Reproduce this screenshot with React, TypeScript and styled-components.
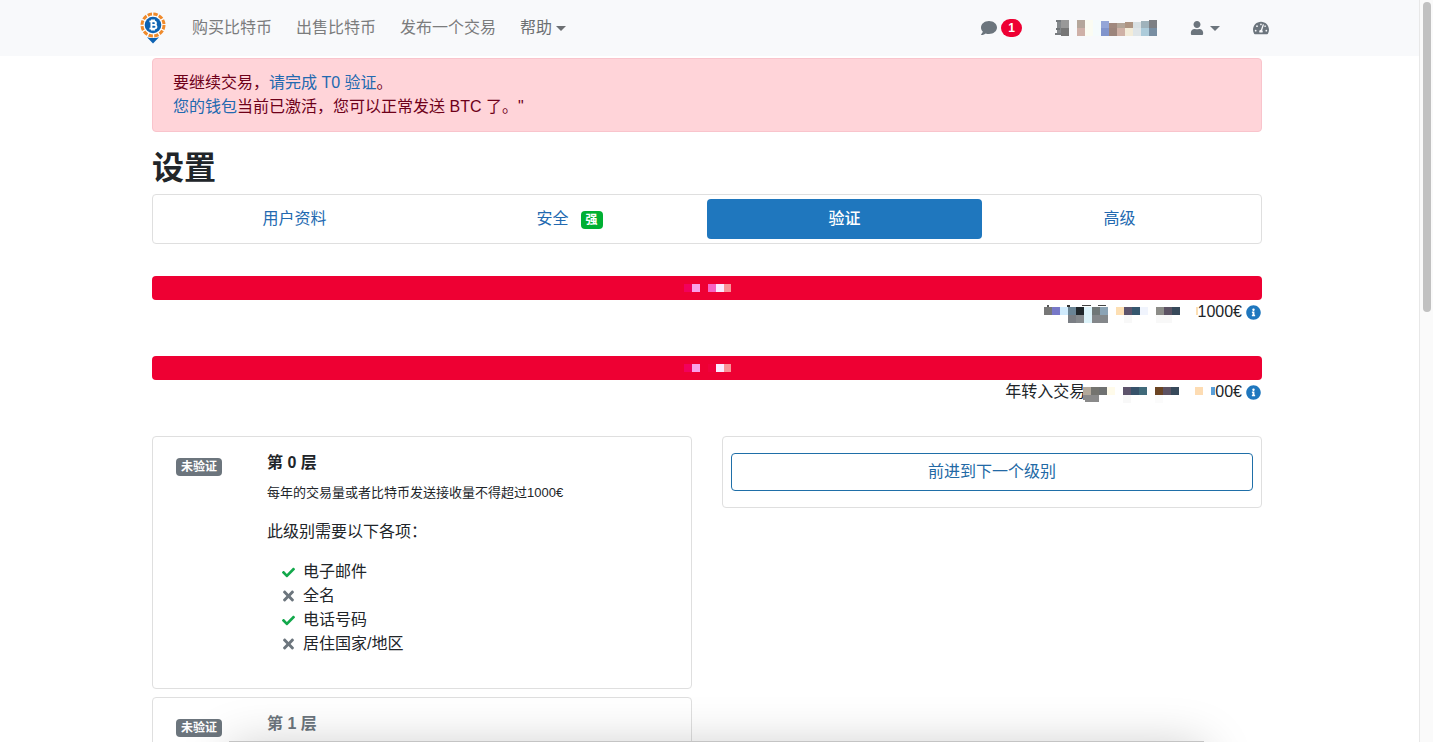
import React from 'react';
import styled, { createGlobalStyle, css } from 'styled-components';
import { FaComment, FaUser, FaTachometerAlt, FaCheck, FaTimes, FaInfoCircle } from 'react-icons/fa';

const GlobalStyle = createGlobalStyle`
  *, *::before, *::after { box-sizing: border-box; }
  body {
    margin: 0;
    background: #fff;
    color: #212529;
    font-family: "Liberation Sans", "Noto Sans CJK SC", sans-serif;
    font-size: 16px;
    line-height: 24px;
  }
  a { color: #2269b0; text-decoration: none; }
  h1, h2, p, ul { margin: 0; padding: 0; }
`;

const Shell = styled.div`
  display: grid;
  grid-template-columns: minmax(0, 1fr) 14px;
  height: 100vh;
`;

const Page = styled.div`
  overflow-y: auto;
  scrollbar-width: none;
`;

const ScrollTrack = styled.div`
  border-left: 1px solid #e8e8e8;
  background: #fafafa;
  padding: 2px 2px 2px 3px;
`;

const ScrollThumb = styled.div`
  height: 42%;
  border-radius: 4px;
  background: #c1c1c1;
`;

const NavBar = styled.header`
  background: #f8f9fb;
  padding-right: 5px;
`;

const NavInner = styled.div`
  display: flex;
  align-items: center;
  max-width: 1140px;
  height: 56px;
  margin: 0 auto;
  padding: 0 8px 0 3px;
`;

const Brand = styled.a`
  display: flex;
  margin-right: 26px;
`;

const NavLinks = styled.nav`
  display: flex;
  gap: 24px;
`;

const NavLink = styled.a`
  color: #7b7c7d;
`;

const NavButton = styled.button`
  display: flex;
  align-items: center;
  gap: 4px;
  padding: 0;
  border: 0;
  background: none;
  color: #6c6f72;
  font: inherit;
`;

const Caret = styled.span`
  border: 5px solid transparent;
  border-top-color: currentColor;
  border-bottom: 0;
`;

const NavTools = styled.div`
  display: flex;
  align-items: center;
  gap: 33px;
  margin-left: auto;
  color: #6c757d;
`;

const ToolLink = styled.a`
  display: flex;
  align-items: center;
  gap: 4px;
  color: #6c757d;
`;

const ToolButton = styled(NavButton)`
  gap: 6px;
  color: #6c757d;
`;

const CountBadge = styled.span`
  min-width: 21px;
  border-radius: 9px;
  background: #ee0033;
  color: #fff;
  font-size: 12px;
  font-weight: 700;
  line-height: 18px;
  text-align: center;
`;

const Container = styled.main`
  padding: 2px 20px 32px 15px;
  > * { max-width: 1110px; margin-left: auto; margin-right: auto; }
`;

const Alert = styled.div`
  padding: 12px 20px;
  border: 1px solid #f9c4cc;
  border-radius: 4px;
  background: #ffd4d9;
  color: #6e0019;
`;

const PageTitle = styled.h1`
  padding: 17px 0 7px;
  font-size: 32px;
  font-weight: 700;
  line-height: 38px;
`;

const Tabs = styled.nav`
  display: grid;
  grid-template-columns: repeat(4, 1fr);
  padding: 4px;
  border: 1px solid #dfdfdf;
  border-radius: 4px;
`;

const Tab = styled.a<{ $active?: boolean }>`
  padding: 8px;
  border-radius: 4px;
  text-align: center;
  ${({ $active }) => $active && css`
    background: #1f77be;
    color: #fff;
    font-weight: 500;
  `}
`;

const Badge = styled.span<{ $tone: 'green' | 'gray' }>`
  display: inline-block;
  padding: 3px 5px;
  border-radius: 4px;
  background: ${({ $tone }) => ($tone === 'green' ? '#00b033' : '#6c757d')};
  color: #fff;
  font-size: 12px;
  font-weight: 700;
  line-height: 12px;
`;

const TabBadge = styled(Badge)`
  margin-left: 12px;
`;

const Volume = styled.section`
  padding-top: 32px;
`;

const Bar = styled.div`
  display: flex;
  justify-content: center;
  align-items: center;
  height: 24px;
  border-radius: 4px;
  background: #ee0033;
`;

const VolumeText = styled.p`
  display: flex;
  justify-content: flex-end;
  align-items: center;
  height: 24px;
  padding-right: 1px;
`;

const InfoButton = styled.button`
  display: flex;
  margin-left: 4px;
  padding: 0;
  border: 0;
  background: none;
  color: #1f77be;
`;

const Columns = styled.div`
  display: grid;
  grid-template-columns: repeat(2, minmax(0, 1fr));
  align-items: start;
  gap: 30px;
  padding-top: 32px;
`;

const Stack = styled.div`
  display: grid;
  gap: 8px;
`;

const Card = styled.article`
  border: 1px solid #dfdfdf;
  border-radius: 4px;
`;

const LevelCard = styled(Card)`
  display: grid;
  grid-template-columns: 91px minmax(0, 1fr);
  padding: 16px 23px;
`;

const LevelStatus = styled.div`
  padding-top: 1px;
`;

const LevelTitle = styled.h2<{ $muted?: boolean }>`
  margin-bottom: 8px;
  color: ${({ $muted }) => ($muted ? '#6c757d' : 'inherit')};
  font-size: 16px;
  font-weight: 600;
  line-height: 20px;
`;

const Limit = styled.p`
  margin-bottom: 15px;
  font-size: 13px;
`;

const Requirements = styled.ul`
  margin: 16px 0;
  padding-left: 15px;
  list-style: none;
`;

const Requirement = styled.li<{ $done: boolean }>`
  display: flex;
  align-items: center;
  gap: 8px;
  svg { width: 13px; color: ${({ $done }) => ($done ? '#12a84b' : '#6c757d')}; }
`;

const ActionCard = styled(Card)`
  padding: 16px 8px;
`;

const OutlineButton = styled.button`
  display: block;
  width: 100%;
  padding: 6px 12px;
  border: 1px solid #1f6fa8;
  border-radius: 4px;
  background: #fff;
  color: #2269a5;
  font: inherit;
`;

const DockShadow = styled.div`
  position: fixed;
  top: calc(100vh - 1px);
  left: 16%;
  right: 16%;
  height: 80px;
  background: #c4c4c4;
  box-shadow: 0 6px 50px rgba(0, 0, 0, 0.22);
  pointer-events: none;
`;

const MosaicSvg = styled.svg<{ $overlap?: boolean }>`
  flex: none;
  margin-left: ${({ $overlap }) => ($overlap ? '-4px' : '0')};
  position: relative;
`;

type Cell = [x: number, y: number, color: string, w?: number, h?: number];

function Mosaic({ width, height, cells, overlap }: { width: number; height: number; cells: Cell[]; overlap?: boolean }) {
  return (
    <MosaicSvg width={width} height={height} $overlap={overlap} shapeRendering="crispEdges" aria-hidden="true">
      {cells.map(([x, y, color, w = 8, h = 8], i) => (
        <rect key={i} x={x} y={y} width={w} height={h} fill={color} />
      ))}
    </MosaicSvg>
  );
}

const balanceCells: Cell[] = [
  [1, 0, '#777b7f', 5, 2], [2, 2, '#85898c', 4, 12], [0, 13, '#777b7f', 6, 2], [1, 8, '#707477', 4, 2],
  [6, 0, '#999'], [6, 8, '#777'],
  [22, 0, '#b5a79b'], [22, 8, '#cfb1a8'],
  [30, 0, '#fbfcf2', 8, 16], [38, 0, '#f5fbfc', 8, 16],
  [46, 1, '#93a5d8', 8, 7], [46, 8, '#8094cc'],
  [54, 3, '#a0887e', 8, 5], [54, 8, '#9c857c'],
  [62, 3, '#b3a598', 8, 5], [62, 8, '#cfb1a6'],
  [70, 2, '#ae9583', 8, 6], [70, 8, '#f3ecd9'],
  [78, 2, '#d8e0e3', 8, 6], [78, 8, '#dfe5e8'],
  [86, 1, '#9fb2bb', 8, 7], [86, 8, '#accbda'],
  [94, 0, '#7d7f83'], [94, 8, '#788ea2'],
];

const firstBarCells: Cell[] = [
  [1, 0, '#f2005c'], [9, 0, '#f9a0e8'], [25, 0, '#f763c4'], [33, 0, '#fbe9ff'], [41, 0, '#f99398'],
];

const secondBarCells: Cell[] = [
  [1, 0, '#f2005c'], [9, 0, '#f9a0e8'], [25, 0, '#f0003c'], [33, 0, '#fbe9ff'], [41, 0, '#f99398'],
];

const firstVolumeCells: Cell[] = [
  [3, 5, '#555', 2, 2], [23, 5, '#333', 3, 2], [38, 5, '#444', 9, 1], [54, 5, '#444', 8, 1],
  [0, 7, '#777'], [8, 7, '#7778c8'], [16, 7, '#cfeafc'], [24, 7, '#6a8495'], [32, 7, '#20272b'],
  [40, 7, '#ddf3fa'], [48, 7, '#6f7777'], [56, 7, '#8ba3b5'], [72, 7, '#fddfb3'], [80, 7, '#5d536b'],
  [88, 7, '#35576e'], [96, 7, '#f0f4fd'], [112, 7, '#8c8c88'], [120, 7, '#5c5263'], [128, 7, '#37495a'],
  [152, 7, '#fddfb3', 2],
  [24, 15, '#7a7e84'], [32, 15, '#85898d'], [40, 15, '#ddf3fa'], [48, 15, '#84878a'], [56, 15, '#84878a'],
  [80, 15, '#f8f8f8'], [112, 15, '#f8f8f8', 16],
];

const secondVolumeCells: Cell[] = [
  [2, 7, '#b3a99b'], [10, 7, '#74746f'], [18, 7, '#6f7171'], [26, 7, '#fffbea'],
  [42, 7, '#5d536b'], [50, 7, '#37526a'], [58, 7, '#406a7a'],
  [74, 7, '#6b4423'], [82, 7, '#5c5263'], [90, 7, '#37495a'],
  [114, 7, '#fddcb3'], [130, 7, '#5a9fd8', 4],
  [2, 15, '#8a8a8a', 16, 5], [4, 20, '#8a8a8a', 14, 2],
  [42, 15, '#f8f8f8'], [74, 15, '#fbfbfb'],
];

function Logo() {
  return (
    <svg width="26" height="32" viewBox="0 0 26 32" aria-label="首页">
      <circle cx="13" cy="13" r="11" fill="#fff" stroke="#ef8a2b" strokeWidth="3" strokeDasharray="4.4 1.36" />
      <path d="M7 25.2Q13 27 19 25.2L13 31.5z" fill="#0e63b3" />
      <circle cx="13" cy="13" r="8.3" fill="#0e63b3" />
      <g fill="none" stroke="#fff" strokeWidth="1.9">
        <path d="M9.4 9.4h4.5c2.7 0 2.7 3.5 0 3.5h-2.4M9.4 16.6h4.8c3 0 3-3.7 0-3.7M11.4 9.4v7.2M12 7.4v2M14 7.4v2M12 16.6v2M14 16.6v2" />
      </g>
    </svg>
  );
}

const requirements = [
  { label: '电子邮件', done: true },
  { label: '全名', done: false },
  { label: '电话号码', done: true },
  { label: '居住国家/地区', done: false },
];

export default function App() {
  return (
    <>
      <GlobalStyle />
      <Shell>
        <Page>
          <NavBar>
            <NavInner>
              <Brand href="#"><Logo /></Brand>
              <NavLinks>
                <NavLink href="#">购买比特币</NavLink>
                <NavLink href="#">出售比特币</NavLink>
                <NavLink href="#">发布一个交易</NavLink>
                <NavButton type="button">帮助<Caret /></NavButton>
              </NavLinks>
              <NavTools>
                <ToolLink href="#" aria-label="消息">
                  <FaComment size={16} />
                  <CountBadge>1</CountBadge>
                </ToolLink>
                <ToolLink href="#" aria-label="钱包">
                  <Mosaic width={102} height={16} cells={balanceCells} />
                </ToolLink>
                <ToolButton type="button" aria-label="账户">
                  <FaUser size={14} />
                  <Caret />
                </ToolButton>
                <ToolLink href="#" aria-label="仪表板">
                  <FaTachometerAlt size={16} />
                </ToolLink>
              </NavTools>
            </NavInner>
          </NavBar>

          <Container>
            <Alert role="alert">
              <p>要继续交易，<a href="#">请完成 T0 验证</a>。</p>
              <p><a href="#">您的钱包</a>当前已激活，您可以正常发送 BTC 了。"</p>
            </Alert>

            <PageTitle>设置</PageTitle>

            <Tabs>
              <Tab href="#">用户资料</Tab>
              <Tab href="#">安全<TabBadge $tone="green">强</TabBadge></Tab>
              <Tab href="#" $active aria-current="page">验证</Tab>
              <Tab href="#">高级</Tab>
            </Tabs>

            <Volume>
              <Bar><Mosaic width={48} height={8} cells={firstBarCells} /></Bar>
              <VolumeText>
                <Mosaic width={154} height={24} cells={firstVolumeCells} />
                1000€
                <InfoButton type="button" aria-label="说明"><FaInfoCircle size={15} /></InfoButton>
              </VolumeText>
            </Volume>

            <Volume>
              <Bar><Mosaic width={48} height={8} cells={secondBarCells} /></Bar>
              <VolumeText>
                年转入交易
                <Mosaic width={134} height={24} cells={secondVolumeCells} overlap />
                00€
                <InfoButton type="button" aria-label="说明"><FaInfoCircle size={15} /></InfoButton>
              </VolumeText>
            </Volume>

            <Columns>
              <Stack>
                <LevelCard>
                  <LevelStatus><Badge $tone="gray">未验证</Badge></LevelStatus>
                  <div>
                    <LevelTitle>第 0 层</LevelTitle>
                    <Limit>每年的交易量或者比特币发送接收量不得超过1000€</Limit>
                    <p>此级别需要以下各项：</p>
                    <Requirements>
                      {requirements.map(({ label, done }) => (
                        <Requirement key={label} $done={done}>
                          {done ? <FaCheck size={13} /> : <FaTimes size={16} />}
                          {label}
                        </Requirement>
                      ))}
                    </Requirements>
                  </div>
                </LevelCard>
                <LevelCard>
                  <LevelStatus><Badge $tone="gray">未验证</Badge></LevelStatus>
                  <LevelTitle $muted>第 1 层</LevelTitle>
                </LevelCard>
              </Stack>
              <ActionCard>
                <OutlineButton type="button">前进到下一个级别</OutlineButton>
              </ActionCard>
            </Columns>
          </Container>
        </Page>
        <ScrollTrack aria-hidden="true"><ScrollThumb /></ScrollTrack>
      </Shell>
      <DockShadow />
    </>
  );
}
